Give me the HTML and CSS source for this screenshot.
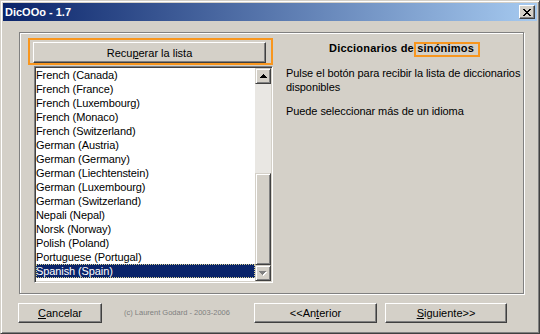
FILE: index.html
```html
<!DOCTYPE html>
<html lang="es">
<head>
  <meta charset="UTF-8">
  <meta name="viewport" content="width=device-width, initial-scale=1.0">
  <title>DicOOo - 1.7</title>
  <link rel="stylesheet" href="styles.css">
</head>
<body>
  <div class="window">
    <div class="titlebar">
      <span class="title">DicOOo - 1.7</span>
      <div class="close">
        <svg width="8" height="7" viewBox="0 0 8 7" shape-rendering="crispEdges">
          <path d="M0 0h2v1H0zM6 0h2v1H6zM1 1h2v1H1zM5 1h2v1H5zM2 2h4v1H2zM3 3h2v1H3zM2 4h4v1H2zM1 5h2v1H1zM5 5h2v1H5zM0 6h2v1H0zM6 6h2v1H6z" fill="#000"/>
        </svg>
      </div>
    </div>

    <div class="content">
      <div class="group">
        <div class="left">
          <div class="mark-box">
            <button class="btn btn-fetch">Recu<u>p</u>erar la lista</button>
          </div>

          <div class="listbox">
            <ul class="items">
              <li>French (Canada)</li>
              <li>French (France)</li>
              <li>French (Luxembourg)</li>
              <li>French (Monaco)</li>
              <li>French (Switzerland)</li>
              <li>German (Austria)</li>
              <li>German (Germany)</li>
              <li>German (Liechtenstein)</li>
              <li>German (Luxembourg)</li>
              <li>German (Switzerland)</li>
              <li>Nepali (Nepal)</li>
              <li>Norsk (Norway)</li>
              <li>Polish (Poland)</li>
              <li>Portuguese (Portugal)</li>
              <li class="selected">Spanish (Spain)</li>
            </ul>
            <div class="scrollbar">
              <div class="sb-btn">
                <svg width="7" height="4" viewBox="0 0 7 4" shape-rendering="crispEdges">
                  <path d="M3 0h1v1H3zM2 1h3v1H2zM1 2h5v1H1zM0 3h7v1H0z" fill="#000"/>
                </svg>
              </div>
              <div class="sb-track">
                <div class="sb-thumb"></div>
              </div>
              <div class="sb-btn">
                <svg width="8" height="5" viewBox="0 0 8 5" shape-rendering="crispEdges">
                  <path d="M1 1h7v1H1zM2 2h5v1H2zM3 3h3v1H3zM4 4h1v1H4z" fill="#fff"/>
                  <path d="M0 0h7v1H0zM1 1h5v1H1zM2 2h3v1H2zM3 3h1v1H3z" fill="#808080"/>
                </svg>
              </div>
            </div>
          </div>
        </div>

        <div class="right">
          <h2 class="heading">Diccionarios de <span class="mark-word">sinónimos</span></h2>
          <p>Pulse el botón para recibir la lista de diccionarios disponibles</p>
          <p>Puede seleccionar más de un idioma</p>
        </div>
      </div>

      <div class="footer">
        <button class="btn btn-cancel"><u>C</u>ancelar</button>
        <span class="copyright">(c) Laurent Godard - 2003-2006</span>
        <button class="btn btn-prev">&lt;&lt;An<u>t</u>erior</button>
        <button class="btn btn-next"><u>S</u>iguiente&gt;&gt;</button>
      </div>
    </div>
  </div>
</body>
</html>
```

FILE: styles.css
```css
* {
  box-sizing: border-box;
}

body {
  margin: 0;
  background-color: #d4d0c8;
  font-family: "Liberation Sans", Arial, sans-serif;
  font-size: 11px;
  color: #000;
}

.window {
  width: 540px;
  height: 334px;
  padding: 2px;
  background-color: #d4d0c8;
  border: 1px solid;
  border-color: #d4d0c8 #404040 #404040 #d4d0c8;
  box-shadow: inset 1px 1px #fff, inset -1px -1px #808080;
}

/* title bar */
.titlebar {
  height: 18px;
  display: flex;
  align-items: center;
  padding-left: 2px;
  background: linear-gradient(to right, #0a246a, #a6caf0);
}

.title {
  color: #fff;
  font-weight: bold;
}

.close {
  width: 16px;
  height: 14px;
  margin-left: auto;
  margin-right: 2px;
  display: flex;
  justify-content: center;
  align-items: center;
  padding-right: 1px;
  background-color: #d4d0c8;
  border: 1px solid;
  border-color: #fff #404040 #404040 #fff;
  box-shadow: inset -1px -1px #808080;
}

.close svg {
  display: block;
}

.content {
  padding-top: 11px;
}

/* etched group frame */
.group {
  width: 505px;
  height: 262px;
  margin-left: 16px;
  display: flex;
  padding: 5px 0 0 8px;
  border: 1px solid #808080;
  box-shadow: 1px 1px 0 #fff, inset 1px 1px 0 #fff;
}

.left {
  width: 245px;
  flex: none;
}

.mark-box {
  height: 27px;
  padding: 2px 0 0 3px;
  border: 2px solid #f8961e;
}

.btn {
  font-family: "Liberation Sans", Arial, sans-serif;
  font-size: 11px;
  color: #000;
  padding: 0;
  background-color: #d4d0c8;
  border: 1px solid;
  border-color: #fff #404040 #404040 #fff;
  box-shadow: inset -1px -1px #808080;
}

.btn-fetch {
  display: block;
  width: 233px;
  height: 21px;
}

/* list box */
.listbox {
  width: 239px;
  height: 217px;
  margin: 1px 0 0 6px;
  padding: 1px;
  display: flex;
  background-color: #fff;
  border: 1px solid;
  border-color: #808080 #fff #fff #808080;
  box-shadow: inset 1px 1px #404040, inset -1px -1px #d4d0c8;
}

.items {
  flex: 1;
  list-style: none;
  margin: 0;
  padding: 0;
  overflow: hidden;
  letter-spacing: -0.1px;
}

.items li {
  height: 14px;
  line-height: 14px;
  white-space: nowrap;
}

.items .selected {
  background-color: #0a246a;
  color: #fff;
  outline: 1px dotted #d8d090;
  outline-offset: -1px;
}

.scrollbar {
  width: 16px;
  flex: none;
  display: flex;
  flex-direction: column;
}

.sb-btn,
.sb-thumb {
  background-color: #d4d0c8;
  border: 1px solid;
  border-color: #d4d0c8 #404040 #404040 #d4d0c8;
  box-shadow: inset 1px 1px #fff, inset -1px -1px #808080;
}

.sb-btn {
  height: 16px;
  display: flex;
  justify-content: center;
  align-items: center;
}

.sb-btn svg {
  display: block;
}

.sb-track {
  flex: 1;
  display: flex;
  flex-direction: column;
  justify-content: flex-end;
  background-color: #e9e7e3;
}

.sb-thumb {
  height: 92px;
}

/* right column */
.right {
  width: 238px;
  flex: none;
  margin-left: 13px;
  padding-top: 3px;
}

.heading {
  margin: 0 0 11px;
  padding-right: 7px;
  font-size: 11px;
  font-weight: bold;
  line-height: 14px;
  letter-spacing: 0.2px;
  text-align: center;
}

.mark-word {
  position: relative;
}

.mark-word::after {
  content: '';
  position: absolute;
  left: -3px;
  right: -6px;
  top: 0;
  bottom: -3px;
  border: 2px solid #f8961e;
}

.right p {
  margin: 0 0 10px;
  line-height: 14px;
  letter-spacing: -0.08px;
}

/* bottom buttons */
.footer {
  display: flex;
  align-items: center;
  margin-top: 9px;
  padding: 0 30px 0 15px;
}

.footer .btn {
  height: 20px;
}

.btn-cancel {
  width: 84px;
}

.copyright {
  margin: 0 0 2px 22px;
  font-size: 7.5px;
  color: #808080;
}

.btn-prev {
  width: 123px;
  margin-left: auto;
}

.btn-next {
  width: 122px;
  margin-left: 8px;
}
```
